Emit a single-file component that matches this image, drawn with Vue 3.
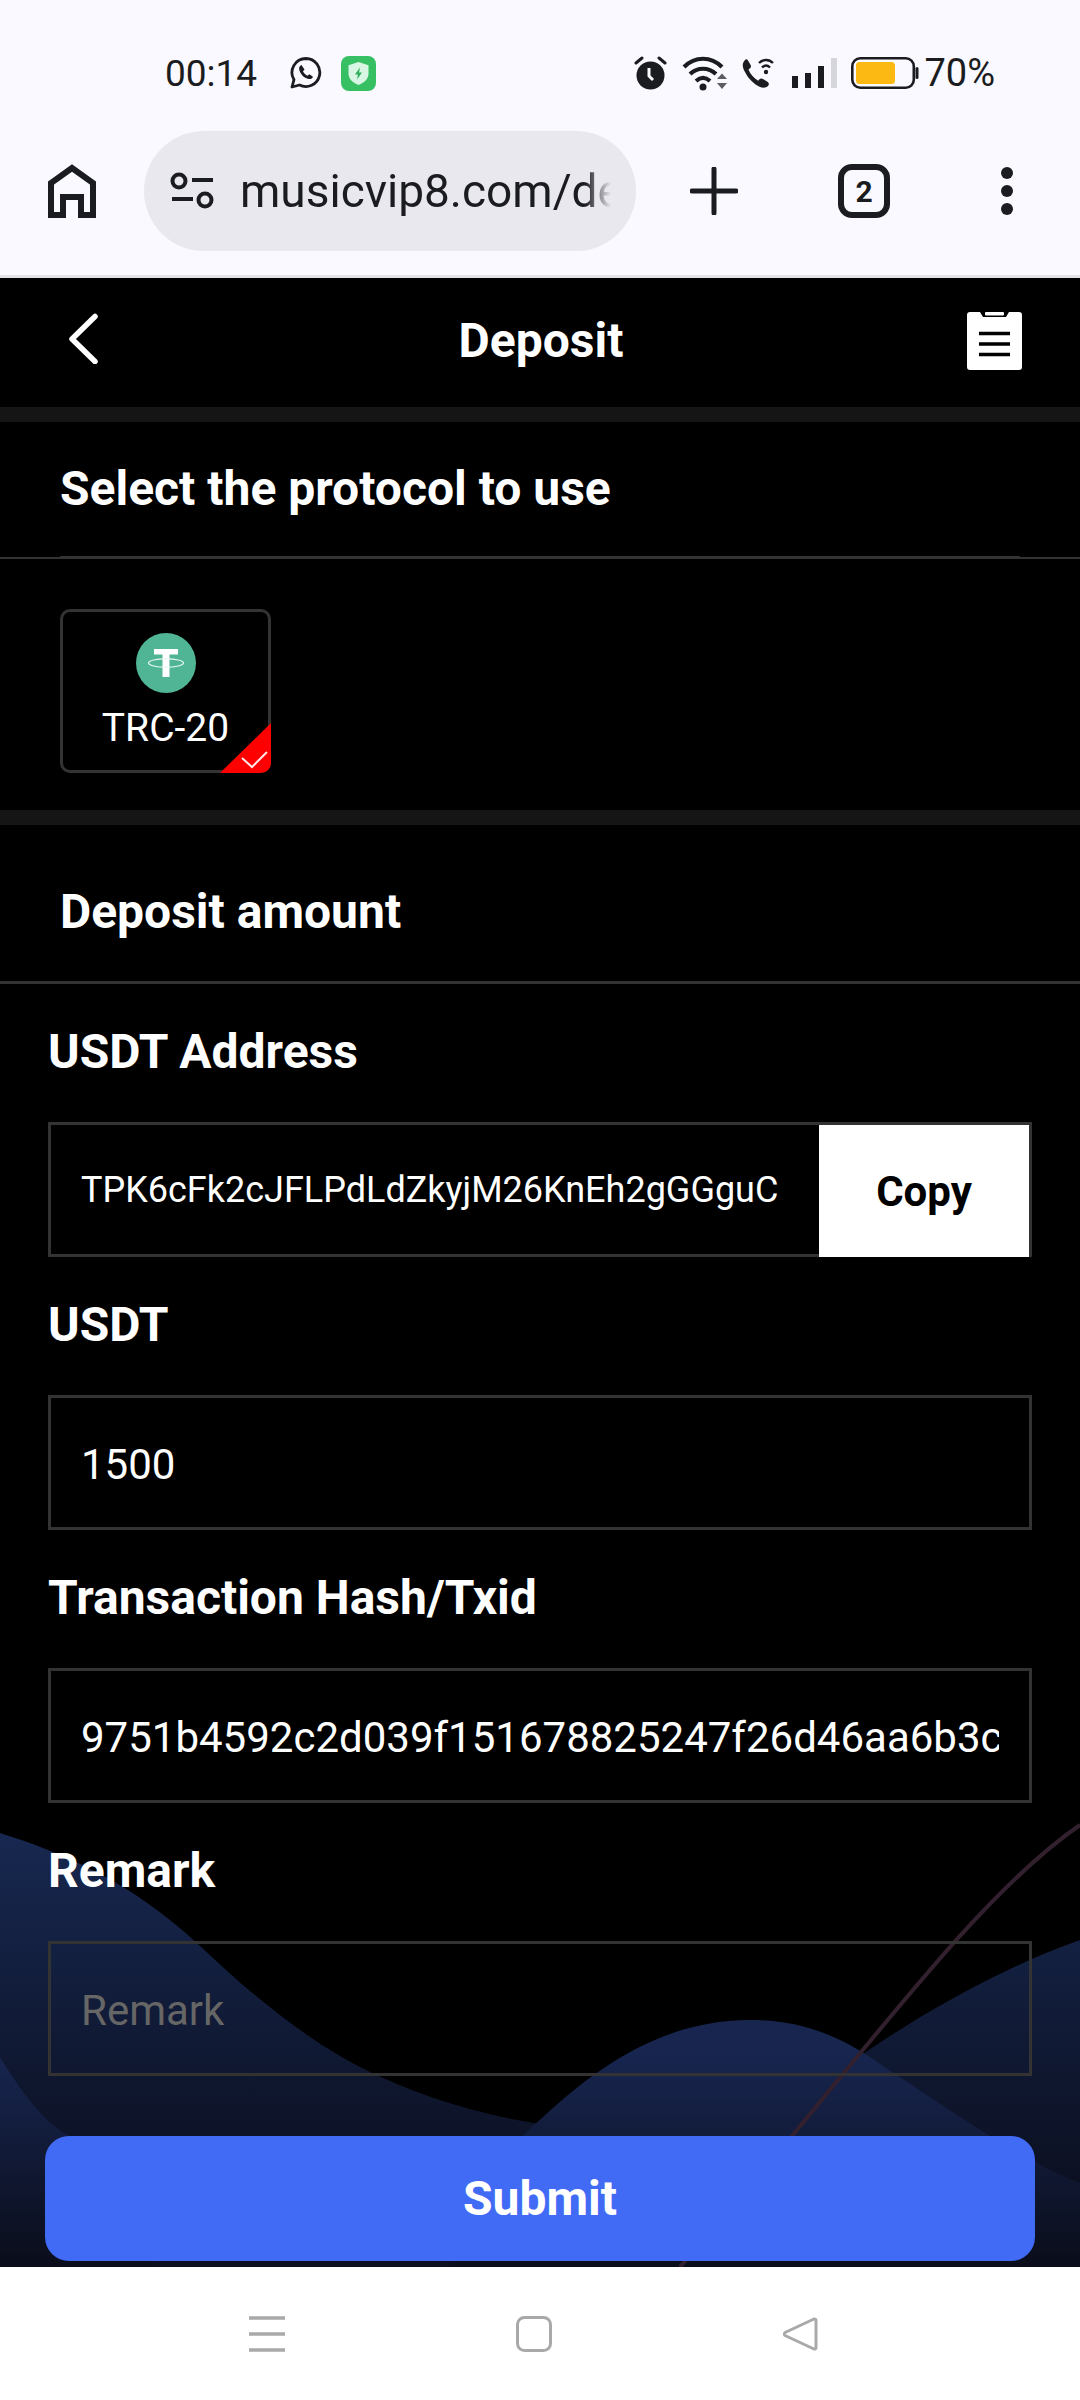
<script setup>
const form = { address: "TPK6cFk2cJFLPdLdZkyjM26KnEh2gGGguC", amount: "1500", hash: "9751b4592c2d039f151678825247f26d46aa6b3c" };
</script>

<template>
  <div class="screen">
    <div class="status">
      <span class="time">00:14</span>
      <svg class="ic-wa" width="32" height="34" viewBox="0 0 32 34" fill="none">
        <path d="M16 2.500a14 14 0 0 0-12 21.200L2 31l7.500-2A14 14 0 1 0 16 2.500z" stroke="#1b1c20" stroke-width="2.800" stroke-linejoin="round" />
        <path d="M11.500 9c-1.800.6-2.700 2.400-2.300 4.400 1 4.600 4.900 8.700 9.500 9.600 2 .3 3.800-.6 4.300-2.300l-3.600-2.400-1.800 1.500c-2-.8-3.700-2.500-4.600-4.500l1.500-1.900z" fill="#1b1c20" />
      </svg>
      <svg class="ic-shield" width="35" height="35" viewBox="0 0 35 35">
        <rect width="35" height="35" rx="8" fill="#37bf64" />
        <path d="M17.500 6l10 3.200v8.300c0 5.500-4.200 9.300-10 11.500-5.800-2.200-10-6-10-11.500V9.200z" fill="#d8f6e3" />
        <path d="M19 11.500l-5 7h3l-1 5 5-7h-3z" fill="#2caf58" />
      </svg>
      <span class="grow"></span>
      <svg width="33" height="34" viewBox="0 0 33 34">
        <circle cx="16.500" cy="19.500" r="14" fill="#1b1c20" />
        <path d="M2 7l6-5M31 7l-6-5" stroke="#1b1c20" stroke-width="3" stroke-linecap="round" />
        <path d="M15 12v8l4 4" stroke="#f9f9ff" stroke-width="3" fill="none" />
      </svg>
      <svg class="ic-wifi" width="46" height="36" viewBox="0 0 46 36" fill="none">
        <path d="M2 12C13 1 29 1 40 12M8 19c7.500-7 18.500-7 26 0M14 26c4.500-4 9.500-4 14 0" stroke="#1b1c20" stroke-width="4.200" />
        <circle cx="21" cy="32" r="3.500" fill="#1b1c20" />
        <path d="M35 24l5-5.500 5 5.500zM35 28h10l-5 6z" fill="#5c5d63" />
      </svg>
      <svg class="ic-call" width="33" height="32" viewBox="0 0 33 32">
        <path d="M3 3c-3 3-3 7 0 12 3.500 7 9 12 15 15 3 1 6 1 8-1 1.500-1.500 1-3.500-1-4.500l-4-2.500c-1.500-1-2.800-.6-3.800.6l-1 1.200C12 21 8 17 6.500 12.500l1.600-1.200c1-.9 1.200-2.300.4-3.500L6 3.500C5.200 2 4 2 3 3z" fill="#1b1c20" />
        <path d="M17 6c4-4 10-4 14 0M20 10.500c2.500-2.500 5.500-2.500 8 0" stroke="#1b1c20" stroke-width="2.400" fill="none" />
        <circle cx="24" cy="15" r="2.200" fill="#1b1c20" />
      </svg>
      <div class="signal">
        <i class="b1"></i><i class="b2"></i><i class="b3"></i><i class="b4"></i>
      </div>
      <svg class="ic-batt" width="68" height="32" viewBox="0 0 68 32">
        <rect x="1.300" y="1.300" width="61.500" height="29.400" rx="8" fill="none" stroke="#1b1c20" stroke-width="2.600" />
        <rect x="5" y="5" width="39" height="22" rx="3.500" fill="#fdb913" />
        <rect x="64.500" y="10" width="3" height="12" rx="1.500" fill="#1b1c20" />
      </svg>
      <span class="pct">70%</span>
    </div>

    <div class="toolbar">
      <svg width="48" height="54" viewBox="0 0 48 54" fill="none">
        <path d="M3 51V19L24 4l21 15v32H33V33H15v18z" stroke="#1b1c20" stroke-width="6" />
      </svg>
      <div class="pill">
        <svg width="44" height="38" viewBox="0 0 44 38" fill="none">
          <circle cx="9" cy="9" r="6.500" stroke="#1b1c20" stroke-width="4" />
          <circle cx="35" cy="28" r="6.500" stroke="#1b1c20" stroke-width="4" />
          <path d="M22 8h21M2 27h21" stroke="#1b1c20" stroke-width="4" />
        </svg>
        <span class="url">musicvip8.com/de</span>
      </div>
      <svg class="ic-plus" width="48" height="48" viewBox="0 0 48 48">
        <path d="M24 2v44M2 24h44" stroke="#1b1c20" stroke-width="5" stroke-linecap="round" />
      </svg>
      <div class="tabs">2</div>
      <svg class="ic-dots" width="14" height="50" viewBox="0 0 14 50" fill="#1b1c20">
        <circle cx="7" cy="7" r="6" /><circle cx="7" cy="25" r="6" /><circle cx="7" cy="43" r="6" />
      </svg>
    </div>

    <div class="page">
      <svg class="waves" width="1080" height="460" viewBox="0 1807 1080 460" fill="none">
        <defs>
          <linearGradient id="w1" gradientUnits="userSpaceOnUse" x1="0" y1="1840" x2="0" y2="2200">
            <stop offset="0" stop-color="#17274f" />
            <stop offset="1" stop-color="#0b0f1f" />
          </linearGradient>
          <linearGradient id="w2" gradientUnits="userSpaceOnUse" x1="0" y1="2030" x2="0" y2="2267">
            <stop offset="0.1" stop-color="#17254f" />
            <stop offset="1" stop-color="#0a0d1a" />
          </linearGradient>
        </defs>
        <path d="M0 1833C60 1852 130 1880 200 1946C260 2003 320 2050 379 2076C430 2100 520 2130 620 2130C700 2130 770 2120 826 2080C880 2040 980 1975 1080 1940V2267H0Z" fill="url(#w1)" />
        <path d="M523 2136C590 2070 660 2020 750 2020C800 2020 840 2035 880 2064C950 2110 1020 2160 1080 2183V2267H450Z" fill="url(#w2)" />
        <path d="M0 2057C20 2090 45 2125 70 2136L160 2267H0Z" fill="url(#w2)" />
        <path d="M1080 1825C1000 1880 920 1980 792 2136L680 2267" stroke="#33202e" stroke-width="4" />
      </svg>

      <div class="head">
        <svg class="back" width="30" height="52" viewBox="0 0 30 52" fill="none">
          <path d="M27 4.500L4 27l23 22.500" stroke="#fff" stroke-width="5.500" stroke-linecap="round" stroke-linejoin="round" />
        </svg>
        <h1>Deposit</h1>
        <svg class="records" width="55" height="58" viewBox="0 0 55 58">
          <path d="M3 0h10l3 5h23l3-5h10a3 3 0 0 1 3 3v52a3 3 0 0 1-3 3H3a3 3 0 0 1-3-3V3a3 3 0 0 1 3-3z" fill="#fff" />
          <rect x="18" y="0" width="19" height="3.500" rx="1" fill="#fff" />
          <path d="M12 21.500h31M12 32h31M12 42.500h31" stroke="#000" stroke-width="3.500" />
        </svg>
      </div>
      <div class="band"></div>
      <div class="title first">
        <div class="title-in">Select the protocol to use</div>
      </div>
      <div class="protocols">
        <div class="chain">
          <svg width="60" height="60" viewBox="0 0 60 60">
            <circle cx="30" cy="30" r="30" fill="#50b595" />
            <path d="M18 16h24v5.500H33.500V44h-7V21.500H18z" fill="#fff" />
            <ellipse cx="30" cy="30" rx="17.500" ry="4.200" fill="none" stroke="#e8f8f2" stroke-width="1.200" />
          </svg>
          <span>TRC-20</span>
          <svg class="tick" width="51" height="50" viewBox="0 0 51 50">
            <path d="M0 50L51 0v40a10 10 0 0 1-10 10z" fill="#ff0000" />
            <path d="M22 35l10 9 15-15" fill="none" stroke="#ffe5e5" stroke-width="2" />
          </svg>
        </div>
      </div>
      <div class="band"></div>
      <div class="title second">Deposit amount</div>

      <div class="form">
        <label>USDT Address</label>
        <div class="box addr">
          <input :value="form.address" readonly />
          <button type="button" class="copy">Copy</button>
        </div>
        <label>USDT</label>
        <div class="box"><input :value="form.amount" /></div>
        <label>Transaction Hash/Txid</label>
        <div class="box"><input :value="form.hash" /></div>
        <label>Remark</label>
        <div class="box"><input placeholder="Remark" /></div>
        <button type="button" class="submit">Submit</button>
      </div>
    </div>

    <div class="nav">
      <svg width="36" height="36" viewBox="0 0 36 36">
        <path d="M0 2h36M0 18h36M0 34h36" stroke="#a9a9a9" stroke-width="3.500" />
      </svg>
      <svg width="36" height="36" viewBox="0 0 36 36">
        <rect x="1.500" y="1.500" width="33" height="33" rx="7" fill="none" stroke="#a9a9a9" stroke-width="3" />
      </svg>
      <svg width="36" height="36" viewBox="0 0 36 36">
        <path d="M32 3a1.500 1.500 0 0 1 2 1.500v27a1.500 1.500 0 0 1-2 1.500L3 19.500a2 2 0 0 1 0-3z" fill="none" stroke="#a9a9a9" stroke-width="3" stroke-linejoin="round" />
      </svg>
    </div>
  </div>
</template>

<style scoped>
.screen {
  width: 1080px;
  height: 2400px;
  display: flex;
  flex-direction: column;
  font-family: Roboto, "Liberation Sans", sans-serif;
  background: #000;
  overflow: hidden;
}
.status {
  height: 146px;
  padding: 0 85px 0 165px;
  box-sizing: border-box;
  display: flex;
  align-items: center;
  background: #f9f9ff;
  color: #1b1c20;
  font-size: 38px;
}
.time {
  font-size: 37px;
}
.grow {
  flex: 1;
}
.ic-wa {
  margin-left: 33px;
}
.ic-shield {
  margin-left: 19px;
}
.ic-wifi {
  margin-left: 15px;
}
.ic-call {
  margin-left: 14px;
}
.signal {
  display: flex;
  align-items: flex-end;
  gap: 7px;
  height: 30px;
  margin-left: 17px;
}
.signal i {
  width: 6px;
  background: #1b1c20;
  display: block;
}
.signal .b1 {
  height: 12px;
}
.signal .b2 {
  height: 15px;
}
.signal .b3 {
  height: 22px;
}
.signal .b4 {
  height: 30px;
  background: #d5d5dc;
}
.ic-batt {
  margin-left: 14px;
}
.pct {
  margin-left: 5px;
}
.toolbar {
  height: 132px;
  padding-left: 48px;
  box-sizing: border-box;
  display: flex;
  align-items: flex-start;
  background: #f9f9ff;
  border-bottom: 3px solid #e4e4e8;
}
.toolbar > svg:first-child {
  margin-top: 18px;
}
.pill {
  width: 492px;
  height: 120px;
  margin-left: 48px;
  margin-top: -15px;
  padding-left: 26px;
  box-sizing: border-box;
  border-radius: 60px;
  background: #e8e8ee;
  display: flex;
  align-items: center;
  gap: 26px;
  overflow: hidden;
}
.url {
  width: 371px;
  overflow: hidden;
  white-space: nowrap;
  font-size: 46px;
  color: #1b1c20;
  -webkit-mask-image: linear-gradient(to right, #000 93%, transparent 100%);
  mask-image: linear-gradient(to right, #000 93%, transparent 100%);
}
.ic-plus {
  margin: 21px 0 0 54px;
}
.tabs {
  width: 52px;
  height: 54px;
  margin: 18px 0 0 100px;
  box-sizing: border-box;
  border: 6px solid #1b1c20;
  border-radius: 14px;
  display: flex;
  align-items: center;
  justify-content: center;
  font-size: 30px;
  font-weight: 700;
  color: #1b1c20;
}
.ic-dots {
  margin: 20px 0 0 110px;
}
.page {
  position: relative;
  height: 1989px;
  background: #000;
  color: #fff;
  overflow: hidden;
}
.waves {
  position: absolute;
  left: 0;
  bottom: 0;
}
.head {
  position: relative;
  height: 129px;
  padding: 0 58px 4px 68px;
  display: grid;
  grid-template-columns: 1fr auto 1fr;
  align-items: center;
  box-sizing: border-box;
}
.back {
  margin-top: -6px;
}
.records {
  justify-self: end;
}
.head h1 {
  margin: 0 0 0 -8px;
  font-size: 48px;
  font-weight: 700;
}
.band {
  height: 15px;
  background: #151515;
}
.title {
  position: relative;
  box-sizing: border-box;
  font-size: 48px;
  font-weight: 700;
  display: flex;
  align-items: center;
}
.title.first {
  height: 137px;
  border-bottom: 2px solid #333;
}
.title-in {
  flex: 1;
  height: 100%;
  margin: 0 60px;
  display: flex;
  align-items: center;
  border-bottom: 2px solid #333;
}
.title.second {
  height: 159px;
  padding: 16px 60px 0;
  border-bottom: 3px solid #333;
}
.protocols {
  position: relative;
  padding: 50px 60px 37px;
}
.chain {
  position: relative;
  width: 211px;
  height: 164px;
  box-sizing: border-box;
  padding-top: 21px;
  border: 3px solid #333;
  border-radius: 10px;
  display: flex;
  flex-direction: column;
  align-items: center;
  font-size: 39px;
  gap: 12px;
}
.tick {
  position: absolute;
  right: -3px;
  bottom: -3px;
}
.form {
  position: relative;
  padding: 0 48px;
  display: flex;
  flex-direction: column;
}
label {
  height: 138px;
  box-sizing: border-box;
  padding-bottom: 4px;
  display: flex;
  align-items: center;
  font-size: 48px;
  font-weight: 700;
}
.box {
  height: 135px;
  box-sizing: border-box;
  border: 3px solid #333;
  display: flex;
}
.box input {
  flex: 1;
  min-width: 0;
  padding: 4px 30px 0;
  border: 0;
  outline: 0;
  background: transparent;
  color: #fff;
  font-family: inherit;
  font-size: 42px;
}
.box input::placeholder {
  color: #666;
}
.addr input {
  padding: 0 10px 0 30px;
  font-size: 36px;
}
.copy {
  width: 210px;
  margin-bottom: -3px;
  border: 0;
  background: #fff;
  color: #000;
  font-family: inherit;
  font-size: 42px;
  font-weight: 700;
}
.submit {
  height: 125px;
  margin: 60px -3px 0;
  border: 0;
  border-radius: 24px;
  background: #416bf5;
  color: #fff;
  font-family: inherit;
  font-size: 48px;
  font-weight: 700;
}
.nav {
  height: 133px;
  padding: 49px 262px 0 249px;
  box-sizing: border-box;
  display: flex;
  justify-content: space-between;
  align-items: flex-start;
  background: #fff;
}
</style>
